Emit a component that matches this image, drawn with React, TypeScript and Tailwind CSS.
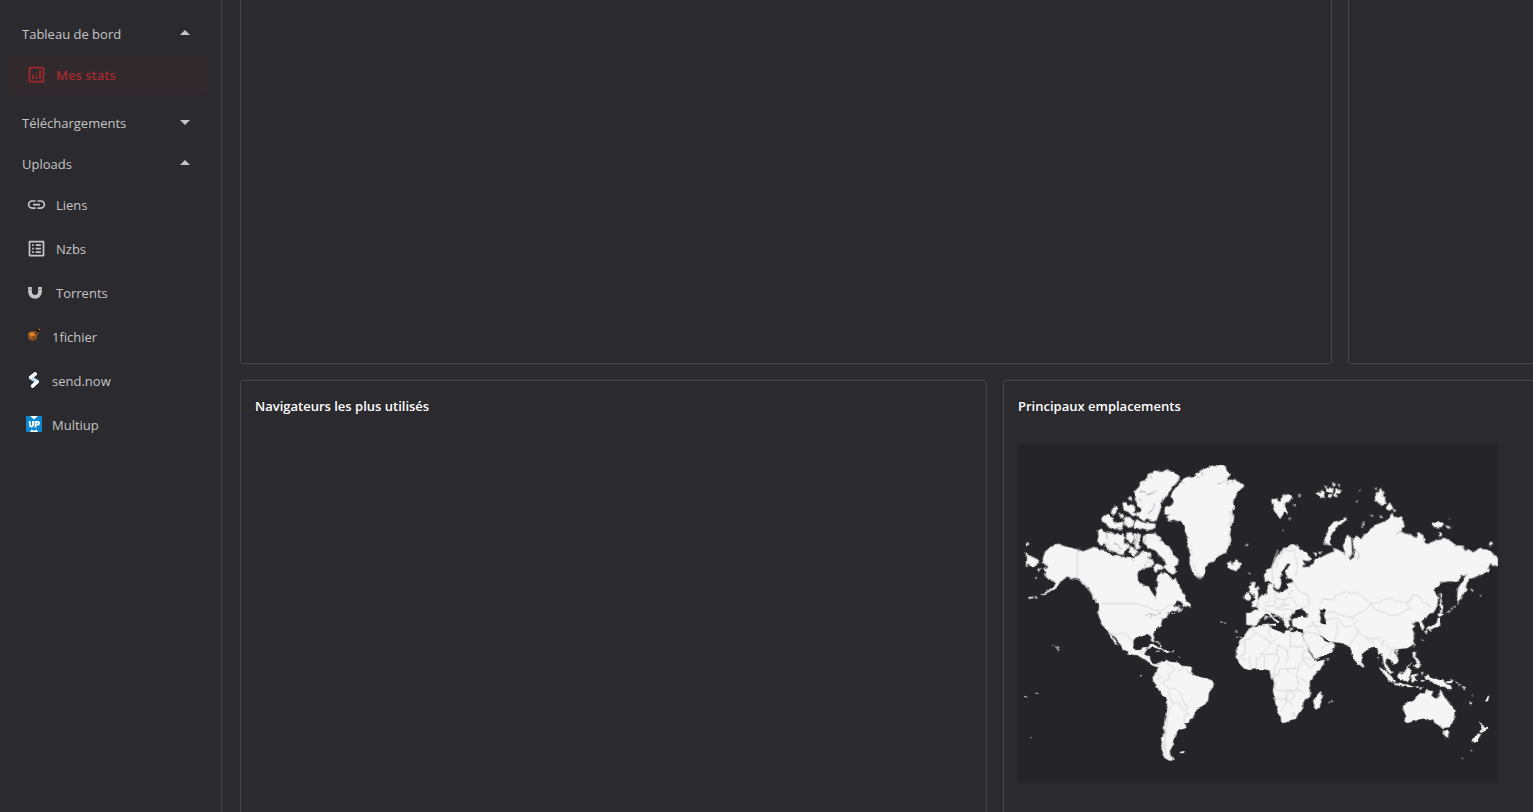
import type { ReactNode } from 'react';
import { MdArrowDropDown, MdArrowDropUp, MdLink, MdOutlineAnalytics, MdOutlineListAlt } from 'react-icons/md';

function MagnetIcon() {
  return (
    <svg viewBox="0 0 21 21" className="size-[21px]" fill="none" aria-hidden="true">
      <path d="M4 5v4.800a5 5 0 0 0 10 0V5" stroke="currentColor" strokeWidth="3.800" />
      <path d="M2 7.600h4M12 7.600h4" stroke="#2b2a2e" strokeWidth="0.300" />
    </svg>
  );
}

function OneFichierIcon() {
  return (
    <svg viewBox="0 0 16 16" className="size-4" aria-hidden="true">
      <path d="M2 5.400 4.500 3.400l4.200 0 2.800 2.500-.8 4.500-3.800 2.600-3.600-1.600L2.200 9z" fill="#9c5a20" />
      <path d="M3 5.800 5.800 4l3 .8-.6 3-3.200 1z" fill="#d9812a" />
      <path d="m6.800 9 3.400-1.200-.5 2.400-2.600 2.100-2.600-.9z" fill="#7d4a1c" />
      <path d="m8.400 4.200 2-2.700 3.600-1.100-1.200 3-2.200 2.800z" fill="#17130f" />
      <path d="M9.200 2.900h1.400v1.400H9.200zM12.400.8h1.600v1.200h-1.600zM11 4.400h1.300v1.400H11z" fill="#d9812a" />
    </svg>
  );
}

function SendNowIcon() {
  return (
    <svg viewBox="0 0 16 16" className="size-4" fill="none" strokeLinecap="round" strokeLinejoin="round" aria-hidden="true">
      <path d="M9.200 2 4.600 5.600l6.600 4L6.600 14" stroke="#b9dcf3" strokeWidth="3.600" />
      <path d="M9.200 1.900 5 5M11.200 9.800 6.600 14" stroke="#fff" strokeWidth="3.200" />
    </svg>
  );
}

function MultiupIcon() {
  return (
    <svg viewBox="0 0 16 16" className="size-4" aria-hidden="true">
      <path d="M0 0h16v16H0z" fill="#0b87cf" />
      <path d="M4 0h8L8 3.600zM4 16l1.400-2.600L8 14.800l2.600-1.400L12 16z" fill="#fff" />
      <path d="M3.800 5v4q0 1.500 1.600 1.500T7 9V5M9.500 11.500V5.900h2.200q1.400 0 1.400 1.400t-1.400 1.400H9.500" fill="none" stroke="#fff" strokeWidth="1.800" />
    </svg>
  );
}

function Section({ title, open, children }: { title: string; open: boolean; children?: ReactNode }) {
  return (
    <section>
      <button type="button" aria-expanded={open} className="flex h-[41px] w-full items-center justify-between pr-3 pl-3 text-left leading-5">
        <span>{title}</span>
        {open ? <MdArrowDropUp className="mb-0.5 size-6" /> : <MdArrowDropDown className="mb-0.5 size-6" />}
      </button>
      {open && <ul className="flex flex-col gap-1 pb-2">{children}</ul>}
    </section>
  );
}

function Item({ icon, label, active, compact }: { icon: ReactNode; label: string; active?: boolean; compact?: boolean }) {
  return (
    <li>
      <a
        href="#"
        aria-current={active ? 'page' : undefined}
        className={`flex h-10 items-center rounded pl-4 leading-5 ${compact ? 'gap-[10px]' : 'gap-[9px]'} ${
          active ? 'bg-[#31292c] font-semibold text-[#a3292f]' : ''
        }`}
      >
        {icon}
        <span className="pt-0.5">{label}</span>
      </a>
    </li>
  );
}

function Card({ title, children, className = '' }: { title?: string; children?: ReactNode; className?: string }) {
  return (
    <section className={`border border-[#454449] p-[14px] ${className}`}>
      {title && <h2 className="text-[13px] leading-[22px] font-semibold text-white">{title}</h2>}
      {children}
    </section>
  );
}

const northWest = [
  // Alaska and Canada
  'M75 345 82 325 95 315 118 302 140 310 165 315 178 320 195 325 215 318 232 312 245 320 262 322 280 335 305 338 325 345 345 345 360 338 368 330 380 325 390 330 388 345 400 345 405 360 400 372 385 375 370 382 358 395 360 412 375 425 390 432 400 445 412 465 416 448 412 435 420 420 418 400 425 388 440 388 455 400 465 410 472 405 480 425 490 440 500 455 505 470 500 475 490 476 478 472 465 485 475 492 490 490 480 500 465 502 452 510H242L243 490 235 470 220 452 212 435 200 425 185 408 165 408 150 400 135 410 122 425 108 438 90 448 70 458 68 455 90 443 108 428 115 415 95 412 80 400 85 388 75 378 88 370 75 360Z',
  'M24 328 40 340 60 350 66 358 55 362 48 372 35 365 24 368ZM25 300 33 298 36 305 27 307ZM58 378 68 377 70 383 62 385ZM34 463 44 461 44 466 35 467ZM48 461 54 459 54 463 48 465ZM52 403 56 403 56 407 52 407Z',
  // Arctic archipelago
  'M240 262 250 258 262 268 275 270 290 275 300 270 306 282 312 268 320 285 317 298 330 308 325 320 318 336 300 332 290 325 275 322 262 310 262 300 250 305 238 295 242 280Z',
  'M248 235 255 220 270 212 276 222 290 225 285 236 300 240 316 236 312 258 290 258 275 250 262 240ZM280 202 288 190 298 192 298 208 290 214 280 212Z',
  'M313 180 325 178 335 192 345 184 352 196 344 208 354 214 345 220 330 206 318 202ZM303 212 314 210 318 220 308 224ZM334 160 341 163 341 172 335 170ZM320 225 335 222 345 232 342 250 328 255 318 245ZM354 206 364 210 362 220 353 218Z',
  'M350 170 350 145 360 135 368 118 385 108 395 92 415 85 440 82 465 85 485 100 480 115 465 130 455 145 440 165 430 185 425 205 418 225 413 236 395 233 387 224 378 235 366 224 362 210 374 202 362 190Z',
  'M355 228 368 236 380 240 412 242 412 258 390 261 370 255 350 257 346 240ZM325 270 345 268 348 285 342 300 330 300 325 285ZM350 275 365 270 364 285 362 300 366 315 355 320 348 300ZM335 308 350 318 362 328 350 338 335 328ZM325 308 330 305 333 315Z',
  'M375 280 390 270 410 272 424 282 428 295 445 305 460 320 466 335 482 350 478 365 468 372 474 385 462 395 450 382 435 372 446 362 436 348 424 335 412 322 400 318 385 308 375 298ZM405 374 418 362 432 368 436 378 420 380 410 386ZM386 330 396 328 400 340 390 342ZM420 326 432 330 430 342 420 338Z',
  'M490 472 500 458 504 476 514 482 518 494 508 492 496 488ZM482 500 495 496 490 504 480 508Z',
  // Greenland
  'M440 200 445 190 460 185 468 175 458 160 462 148 480 125 500 108 525 102 540 88 560 75 590 66 620 70 638 95 625 108 650 112 665 118 676 130 665 142 655 155 648 175 650 190 642 205 645 225 640 250 635 275 640 290 632 315 620 330 600 340 590 352 570 362 562 378 556 400 550 408 540 402 525 390 515 365 515 335 508 310 512 290 505 275 498 250 490 235 470 232 455 235 445 222 455 215 440 210Z',
  // Iceland, Ireland and Britain
  'M626 362 635 356 642 362 655 352 668 362 665 375 650 382 635 378ZM684 307 688 302 690 306 686 309ZM691 389 697 390 696 394ZM680 455 695 448 698 460 691 470 680 467ZM692 428 700 418 710 416 706 430 716 436 720 450V495L700 494 708 484 700 478 710 470 706 455 698 448ZM700 510 708 504 720 503V510Z',
];

const northEast = [
  // Northern Europe, Siberia and Kamchatka
  'M18 395 25 380 40 375 48 355 60 335 75 318 95 308 115 306 125 318 145 330 158 345 155 355 138 352 130 350 140 362 135 372 150 372 165 362 170 350 185 345 205 335 215 330 230 325 225 315 240 320 254 328 262 338 272 342 276 352 286 344 290 330 286 308 284 290 292 278 302 282 308 290 318 276 330 270 335 260 355 245 375 238 390 225 403 210 412 222 430 225 438 240 430 262 440 272 460 275 475 285 482 270 495 275 500 300 520 298 535 290 560 285 580 295 590 308 612 308 620 322 650 325 658 318 690 320 700 330 720 345V372L705 365 695 360 690 375 692 388 675 392 655 400 645 405 634 402 628 425 625 440 610 462 600 478 598 460 600 435 610 420 618 405 630 392 620 398 610 398 600 412 588 415 570 415 550 418 538 430 525 443 535 452 540 465 538 485 532 500 525 510H0V470L8 462 20 455 32 450 30 438 34 424 44 426 46 442 56 450 75 444 92 436 88 422 108 418 100 408 90 406 83 395 84 385 92 370 95 362 85 362 76 378 70 390 68 405 70 420 62 438 52 440 45 425 35 415 22 418Z',
  'M258 320 260 290 272 275 279 285 281 310 282 330 276 345 262 338ZM198 298 208 270 215 250 230 238 250 232 262 222 266 230 250 242 235 252 225 265 215 285 215 300 222 310 205 308ZM166 328 177 326 174 338ZM184 325 192 323 190 333Z',
  // Svalbard and Franz Josef Land
  'M40 170 55 165 70 175 75 158 90 153 104 160 100 175 82 178 80 190 92 205 90 215 78 205 72 215 65 227 55 210 45 195ZM102 186 113 185 112 189ZM120 159 128 156 126 162ZM95 227 99 229 97 232ZM72 260 76 261 73 264Z',
  'M172 150 182 144 192 152 184 158ZM190 142 200 148 198 164 186 160ZM205 140 216 134 226 140 224 150 212 146ZM222 122 232 122 229 134ZM212 154 224 154 218 164 208 162ZM232 140 250 138 246 148 234 154ZM202 128 210 130 206 137ZM226 154 236 152 238 162 228 160ZM239 124 245 124 244 130Z',
  // Russian Arctic islands
  'M350 135 356 137 355 141ZM350 150 360 146 368 135 375 150 376 160 385 165 382 185 370 188 360 178 352 172ZM385 195 395 178 405 195 395 203ZM404 198 415 203 408 206ZM304 141 310 142 307 145ZM293 172 300 174 296 178ZM340 216 346 218 342 222ZM365 218 372 220 369 226ZM312 238 320 240 316 246ZM310 248 318 252 312 256ZM522 242 540 235 558 245 550 255 530 255ZM562 248 582 252 574 257ZM540 268 552 276 544 280ZM572 225 576 226 574 229ZM690 302 700 296 705 302 696 307Z',
  // Sakhalin and the Kuril Islands
  'M544 450 550 455 549 470 555 490 552 510H546L548 490ZM598 482 602 478 600 484ZM588 492 593 488 591 494ZM578 499 584 494 582 500ZM567 508 575 501 572 508ZM638 437 646 442 642 446ZM665 457 669 457 668 461Z',
];

const southWest = [
  'M240 0H450L445 12 432 20 428 38 412 50 405 60 408 75 412 88 404 85 398 68 385 65 370 70 355 72 346 82 346 100 355 112 368 112 372 104 385 102 383 115 378 125 395 130 398 145 410 155 420 150 428 152 418 162 405 158 392 150 385 140 370 135 360 127 345 125 330 120 315 110 310 98 295 80 285 65 278 60 285 75 300 98 292 96 280 78 272 58 258 40 248 25Z',
  'M386 104 398 96 412 97 426 104 438 110 425 109 405 102 390 108ZM434 113 445 111 459 117 448 120 436 118ZM416 116 425 117 420 119ZM463 114 468 115 465 118ZM416 84 422 87 418 90ZM420 90 428 96 426 102ZM482 128 487 130 484 132ZM464 0 471 0 467 4Z',
  'M420 165 425 150 440 140 450 145 465 148 485 150 495 162 520 165 527 185 545 192 570 198 587 210 585 222 572 240 570 262 560 275 540 285 532 300 520 318 510 330 498 330 502 345 480 352 472 365 465 385 465 395 455 415 458 428 470 440 455 443 440 435 432 420 430 395 437 360 440 320 447 290 448 260 430 242 415 220 405 205 410 185Z',
  'M486 416 496 415 498 420 488 422ZM367 186 371 187 369 191ZM116 104 124 110 120 112ZM103 99 107 100 105 102ZM112 101 117 104 114 105ZM20 249 27 249 26 253 20 252ZM53 239 57 240 55 243ZM37 373 41 374 39 376ZM610 26 614 26 613 30ZM620 29 624 30 622 33ZM653 52 657 53 656 57ZM655 72 660 71 659 75ZM664 72 671 73 667 76Z',
  'M685 0H720V30L707 40 697 34 685 35ZM720 38 702 42 695 48 680 68 665 85 657 105 658 120 653 135 665 150 680 165 692 170 720 168Z',
];

const southEast = [
  'M0 0H38L50 15 66 24 62 32 44 16 34 8 22 2 14 8 4 18 0 30ZM36 34 54 32 50 40ZM20 12 24 12 23 22 19 20Z',
  'M46 0H104L98 10 100 20 92 24 96 38 88 44 80 32 74 20 60 10ZM92 47 106 48 98 51Z',
  'M0 35 35 32 42 48 60 55 75 62 85 52 100 55 130 58 135 75 145 95 155 120 168 140 180 145 200 140 195 155 175 180 155 205 155 235 157 250 135 268 135 285 125 300 105 322 85 328 70 330 68 310 58 290 50 260 45 235 50 210 38 190 35 172 15 168 0 168Z',
  'M146 0H184L188 16 186 28 196 34 207 35 202 20 198 8 202 0H515L505 12 490 25 499 42 494 53 486 44 482 25 470 28 460 30 472 38 462 48 470 62 470 80 462 95 445 105 425 108 412 108 408 118 420 135 418 150 405 155 398 140 385 135 382 150 390 165 402 178 398 184 386 172 380 160 376 145 372 120 362 125 358 105 345 98 330 110 312 125 310 150 302 160 292 142 282 125 278 106 268 100 255 90 235 88 215 85 200 75 188 66 196 82 212 90 218 84 232 98 222 115 190 130 170 138 158 118 145 95 135 72 134 46 122 44 104 40 102 22 112 13 130 11 146 15Z',
  'M310 150 316 158 312 164 306 158ZM204 136 210 137 206 140ZM358 132 362 134 359 142ZM170 265 175 248 188 235 195 250 185 280 175 290 165 280ZM210 266 216 267 212 271ZM220 264 225 265 222 268Z',
  // Japan, Taiwan and the Philippines
  'M538 4 548 0 560 0 554 8 545 12ZM540 14 547 18 546 38 528 46 514 50 504 52 510 44 526 38 538 28ZM500 54 508 54 504 64ZM512 52 520 51 516 56ZM464 90 469 88 467 101ZM412 110 422 110 418 116ZM492 80 497 80 494 84ZM464 118 473 116 472 132 482 140 476 144 465 132ZM474 144 486 142 484 150 476 152ZM470 156 480 152 488 150 489 162 478 166 470 160ZM448 164 462 148 458 156 450 168Z',
  // Indonesia and New Guinea
  'M366 163 376 168 388 180 402 192 410 208 400 208 388 196 378 182ZM408 211 425 212 450 215 468 222 452 222 430 219 410 215ZM420 182 435 180 448 165 460 172 455 190 445 205 428 200 418 192ZM460 186 482 182 478 188 468 190 478 204 470 202 464 210 458 200ZM490 176 495 180 492 190ZM486 202 500 202 496 206ZM470 222 482 220 480 225ZM486 226 496 220 490 228Z',
  'M500 190 512 188 520 198 535 194 552 200 562 210 572 218 582 228 568 228 555 220 545 222 530 216 526 206 510 204 502 198ZM564 206 578 204 588 200 580 210 566 210ZM578 194 588 200 586 204ZM592 206 600 210 596 213ZM600 212 608 218 604 220ZM612 222 622 228 618 231ZM642 244 646 248 643 250ZM632 264 644 272 640 275ZM684 254 694 248 690 262 682 262Z',
  // Australia and New Zealand
  'M437 275 445 270 465 262 478 248 488 240 500 242 505 232 525 235 520 248 535 258 542 248 548 228 555 245 565 262 580 275 592 290 592 310 582 330 575 345 555 348 540 335 530 330 525 318 515 322 505 315 485 318 470 325 445 330 440 318 445 310 435 285ZM555 353 573 355 570 372 562 373ZM665 328 678 342 688 342 682 355 672 364 665 355 672 348ZM662 360 668 368 655 388 646 392 641 384ZM638 411 642 412 640 415ZM609 435 614 435 613 438Z',
];

// Land that crosses the lines where the four quadrants meet
const joins =
  'M246 505H448V515H246ZM706 506H756V513H706ZM768 505H822V513H768ZM868 505H902V515H868ZM926 505H1240L1232 515H926ZM715 430H725V440H715ZM715 508H725V536H715ZM715 549H725V676H715Z';

const inlets = [
  'M365 148 378 146 390 152 405 152 414 140M370 118 376 124M395 96 402 106M362 168 370 172M410 180 404 200 390 210M480 106 496 122M530 96 545 106M550 86 556 98M598 122 620 112 634 118 630 130M648 110 642 122M440 212 456 214',
  'M265 268 268 290M308 320 300 305 290 300M385 272 382 300M358 270 350 320M345 345 350 355M388 355 382 372M1014 350 1024 335 1010 320M1002 325 1012 342M1134 278 1150 262',
  'M385 512 384 520M390 512 402 514 398 522M404 520 416 516M420 514 428 510',
  'M832 502 850 497 862 506 868 515 846 521 828 518ZM905 497 920 497 925 503 918 510 908 508Z',
];

const shores =
  'M188 412 205 430 218 445 226 460 240 480M370 118 385 112 392 98M352 160 362 180 374 196M516 305 522 325 520 350 528 375 542 396M640 205 636 240 632 270 636 292 626 312M774 372 788 335 806 314 836 310M440 860 434 890 436 915 446 936 462 946M260 300 285 318 305 328M420 290 450 315 468 345M385 350 400 362';

const borders = [
  'M178 320V408L192 415 205 432 228 460M248 482H355L372 488 390 492 410 502 430 504 446 490 462 484',
  'M275 568 295 575 310 570 325 572 338 590 346 592M368 622 370 632 378 628M384 642 396 646',
  'M450 654 448 664 465 670 470 682 452 694 455 708 438 714 435 722 455 738 470 735 490 752 494 770 500 785 510 790 505 802 492 798 482 776 462 782 455 760 450 742M495 672 490 680 476 686M505 674 510 690 525 692M418 690 430 702 415 712M458 786 450 810 444 860 440 900 442 930M498 838 500 820 508 808 514 818',
  'M690 545 704 546M700 552 712 570 696 588 682 590 670 600M682 590 680 634 664 640M712 568 735 582 758 598 776 588M758 598 752 610 730 632 724 650M694 638 698 676M662 644 684 650M716 640 714 678',
  'M756 545 752 568 760 582M817 568V610L810 622 776 604M817 610 860 611M808 622 810 650 802 660M780 606 776 630 784 650 770 672M730 634 752 634 776 634M740 640 738 672M770 672 766 700 780 696 784 678 806 676 812 690M806 676 840 676 846 660 862 644 882 650M766 700 772 740 790 744 806 742 810 756M840 680 835 700 842 722 836 742 812 742M842 702 868 720M804 755 806 775 796 790 788 806M808 742 830 750 826 766 812 776 800 770M812 776 826 788M836 744 854 744M765 765 796 768 810 766M824 810 832 812 829 820 823 815ZM852 644 876 676 894 660M852 644 856 628 868 616M770 742 768 726 776 718',
  'M780 320 768 350 762 385 764 415M800 316 812 325 834 320M826 322 836 350 838 375 832 398M814 420 832 422 838 440 850 448 870 456 874 485 850 498M770 445 774 465 768 490 740 488M774 465 798 470 818 462 830 475 838 492M798 470 796 490 774 494M740 480 758 472M770 495 790 500 818 498 830 510M816 440 826 446M808 448 820 455M785 484 815 486M730 494 744 500 760 510M744 500 742 510',
  'M905 485 915 468 945 470 955 455 985 445 1000 452 1018 448 1036 462 1058 482 1085 478 1098 468 1122 466 1130 475 1160 478 1178 474 1182 456 1202 458 1212 476 1235 485 1238 494M1058 482 1045 500 1022 512 1010 518 1000 532M1058 482 1072 500 1100 510 1120 518 1145 514 1162 502 1180 496 1166 486 1172 476M926 510 946 505 965 516 985 520 1004 522M925 530 958 525 980 552 1002 548 1020 530M948 596 960 562 956 538M990 610 1005 592 1024 565 1010 546M1018 562 1038 582 1060 588 1080 584 1092 604M1040 582 1056 596 1070 600M1098 590 1092 612M1106 604 1120 624 1112 644M1120 620 1136 628 1134 646M1124 612 1140 632 1132 640M866 553 880 550 885 534M866 566 885 570 908 576M852 570 866 566M884 536 900 560 908 574M910 618 925 604 950 600M886 550 912 550M1186 546 1194 530',
  'M735 516 752 522 778 518M798 512 794 526 812 528M1144 688 1158 688 1166 684',
];

function WorldMap() {
  return (
    <svg viewBox="0 0 1440 1020" className="h-[340px] w-[480px] max-w-none bg-[#252529]" role="img" aria-label="Carte du monde">
      <defs>
        <filter id="coast" x="0" y="0" width="100%" height="100%" colorInterpolationFilters="sRGB">
          <feTurbulence type="fractalNoise" baseFrequency="0.050" numOctaves="2" seed="4" result="noise" />
          <feDisplacementMap in="SourceGraphic" in2="noise" scale="12" xChannelSelector="R" yChannelSelector="G" />
        </filter>
      </defs>
      <g filter="url(#coast)">
        <g fill="#f5f5f5" stroke="#f5f5f5" strokeWidth="1" strokeLinejoin="round">
          {northWest.map((d) => <path key={d} d={d} />)}
          <g transform="translate(720 0)">{northEast.map((d) => <path key={d} d={d} />)}</g>
          <g transform="translate(0 510)">{southWest.map((d) => <path key={d} d={d} />)}</g>
          <g transform="translate(720 510)">{southEast.map((d) => <path key={d} d={d} />)}</g>
          <path d={joins} stroke="none" />
        </g>
        <path d={shores} fill="none" stroke="#e0e0e0" strokeWidth="5" strokeDasharray="7 4" />
        <g fill="none" stroke="#a8a8aa" strokeWidth="2.500">
          <path d={inlets[0]} />
          <path d={inlets[1]} />
          <path d={inlets[2]} />
          <path d={inlets[3]} stroke="none" fill="#252529" />
        </g>
      </g>
      <g fill="none" stroke="#d8d8d8" strokeWidth="3" strokeLinejoin="round">
        {borders.map((d) => <path key={d} d={d} />)}
      </g>
    </svg>
  );
}

export default function App() {
  return (
    <div className="flex h-screen overflow-hidden bg-[#2b2a2e] font-['Segoe_UI','Open_Sans',sans-serif] text-[13px] text-[#c5c5c6]">
      <nav className="w-[222px] shrink-0 border-r border-[#454449] pt-[13px] pr-3 pl-[10px]" aria-label="Navigation">
        <Section title="Tableau de bord" open>
          <Item icon={<MdOutlineAnalytics className="size-[21px]" />} label="Mes stats" active />
        </Section>
        <Section title="Téléchargements" open={false} />
        <Section title="Uploads" open>
          <Item icon={<MdLink className="size-[21px]" />} label="Liens" />
          <Item icon={<MdOutlineListAlt className="size-[21px]" />} label="Nzbs" />
          <Item icon={<MagnetIcon />} label="Torrents" />
          <Item icon={<OneFichierIcon />} label="1fichier" compact />
          <Item icon={<SendNowIcon />} label="send.now" compact />
          <Item icon={<MultiupIcon />} label="Multiup" compact />
        </Section>
      </nav>
      <main className="min-w-0 flex-1 overflow-hidden pl-[18px]">
        <div className="flex h-full w-[calc(100%+217px)] flex-col gap-4">
          <div className="grid h-[364px] shrink-0 grid-cols-[731fr_269fr] gap-4">
            <Card className="rounded-b border-t-0" />
            <Card className="rounded-b border-t-0" />
          </div>
          <div className="grid flex-1 grid-cols-2 gap-4">
            <Card title="Navigateurs les plus utilisés" className="rounded-t border-b-0" />
            <Card title="Principaux emplacements" className="rounded-t border-b-0">
              <div className="mt-[26px]">
                <WorldMap />
              </div>
            </Card>
          </div>
        </div>
      </main>
    </div>
  );
}
